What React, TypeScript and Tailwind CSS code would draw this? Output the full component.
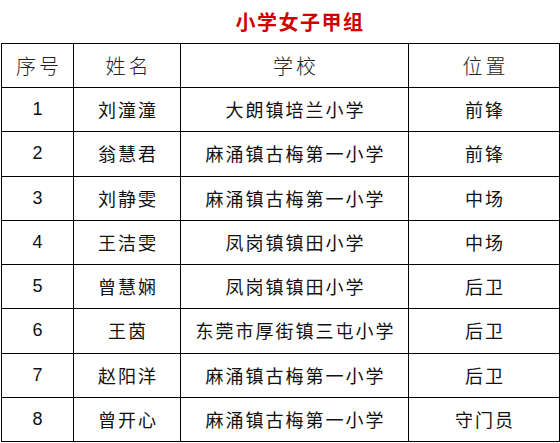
import React from 'react';

const rows = [
  { no: '1', name: '刘潼潼', school: '大朗镇培兰小学', pos: '前锋' },
  { no: '2', name: '翁慧君', school: '麻涌镇古梅第一小学', pos: '前锋' },
  { no: '3', name: '刘静雯', school: '麻涌镇古梅第一小学', pos: '中场' },
  { no: '4', name: '王洁雯', school: '凤岗镇镇田小学', pos: '中场' },
  { no: '5', name: '曾慧娴', school: '凤岗镇镇田小学', pos: '后卫' },
  { no: '6', name: '王茵', school: '东莞市厚街镇三屯小学', pos: '后卫' },
  { no: '7', name: '赵阳洋', school: '麻涌镇古梅第一小学', pos: '后卫' },
  { no: '8', name: '曾开心', school: '麻涌镇古梅第一小学', pos: '守门员' },
];

const cjk = "font-['Noto_Sans_CJK_SC',sans-serif]";

export default function App() {
  return (
    <div className="w-[560px] h-[443px] bg-white overflow-hidden">
      <div className="h-[43px] flex items-center justify-center pl-[40px]">
        <h1 className={`${cjk} text-[20px] font-semibold tracking-[1.5px] text-[#d00000] leading-none`}>
          小学女子甲组
        </h1>
      </div>
      <table className="ml-[1px] w-[558px] border-collapse table-fixed text-black">
        <colgroup>
          <col className="w-[72px]" />
          <col className="w-[107px]" />
          <col className="w-[228px]" />
          <col className="w-[151px]" />
        </colgroup>
        <thead>
          <tr className="h-[44px]">
            {['序号', '姓名', '学校', '位置'].map((h) => (
              <th key={h} className={`border border-black ${cjk} font-light text-[20px] tracking-[3px] pl-[3px] text-[#222]`}>
                {h}
              </th>
            ))}
          </tr>
        </thead>
        <tbody>
          {rows.map((r) => (
            <tr key={r.no} className="h-[44.25px]">
              <td className="border border-black text-center font-['Liberation_Sans',sans-serif] text-[18px] text-[#111]">{r.no}</td>
              <td className={`border border-black text-center ${cjk} text-[18px] tracking-[2px] pl-[2px] text-[#111]`}>{r.name}</td>
              <td className={`border border-black text-center ${cjk} text-[18px] tracking-[2px] pl-[2px] text-[#111]`}>{r.school}</td>
              <td className={`border border-black text-center ${cjk} text-[18px] tracking-[2px] pl-[2px] text-[#111]`}>{r.pos}</td>
            </tr>
          ))}
        </tbody>
      </table>
    </div>
  );
}
